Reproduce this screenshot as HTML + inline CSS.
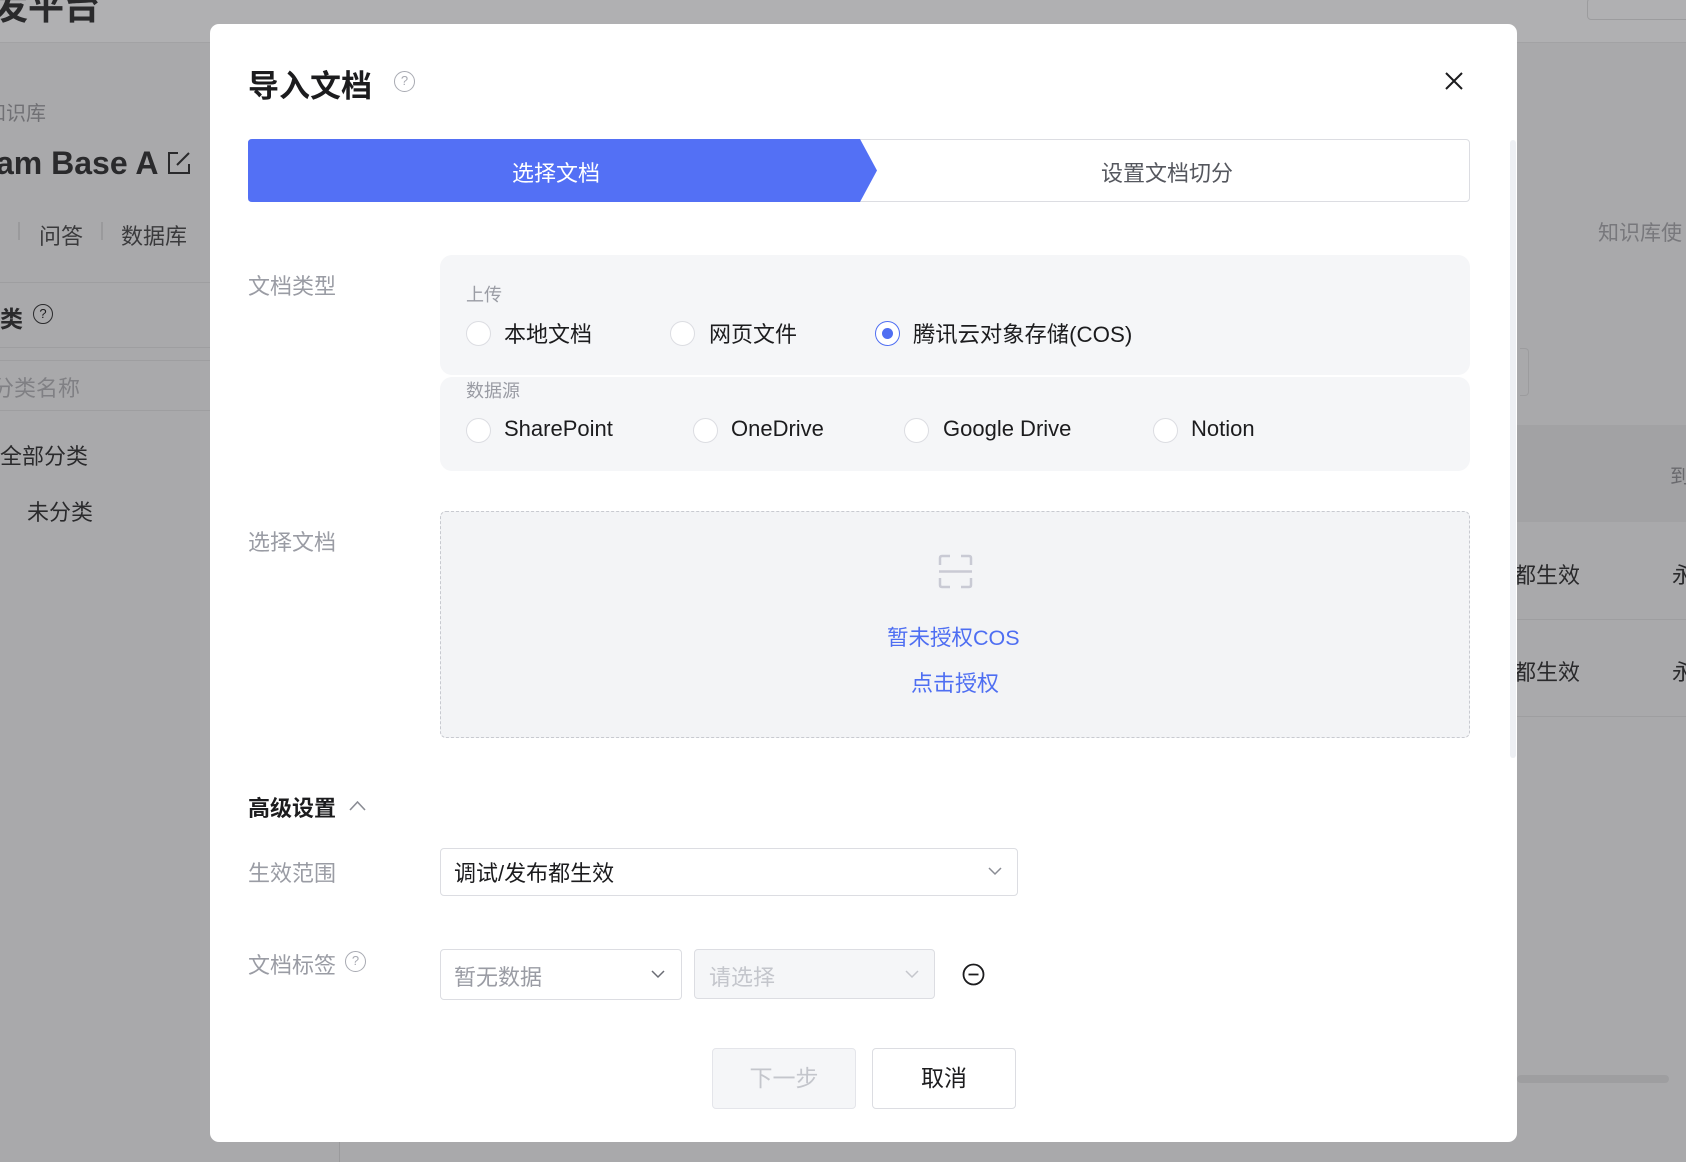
<!DOCTYPE html>
<html><head><meta charset="utf-8"><style>
*{box-sizing:border-box;margin:0;padding:0}
body{width:1686px;height:1162px;position:relative;overflow:hidden;background:#a9a9ab;font-family:"Liberation Sans","Noto Sans CJK SC",sans-serif;color:#1c1c1e}
.a{position:absolute;white-space:nowrap}
.bg{color:#2a2a2c}
.g{color:#9a9ca4}
.radio{position:absolute;width:25px;height:25px;border-radius:50%;border:1px solid #dcdde2;background:#fff}
.radio.on{border-color:#4f6ef2}
.radio.on::after{content:"";position:absolute;left:6px;top:6px;width:11px;height:11px;border-radius:50%;background:#4f6ef2}
.opt{font-size:22px;color:#1c1c1e}
.sel{position:absolute;border:1px solid #dcdde2;border-radius:4px;background:#fff}
</style></head><body>
<!-- backdrop -->
<div class="a" style="left:0;top:0;width:1686px;height:43px;background:#b0b0b2;border-bottom:1px solid #a2a2a4"></div>
<div class="a bg" style="left:-8px;top:-22px;font-size:36px;font-weight:bold">发平台</div>
<div class="a" style="left:1587px;top:-2px;width:110px;height:22px;border:1px solid #9c9c9e;border-radius:4px"></div>
<div class="a" style="left:-14px;top:97px;font-size:20px;color:#707074">知识库</div>
<div class="a bg" style="left:-4px;top:145px;font-size:32px;font-weight:bold">am Base A</div>
<svg class="a" style="left:166px;top:150px" width="26" height="26" viewBox="0 0 26 26" fill="none" stroke="#2a2a2c" stroke-width="2"><path d="M12 3H3v20h20v-9"/><path d="M11 15l12-12"/></svg>
<div class="a" style="left:18px;top:222px;width:2px;height:18px;background:#9a9a9c"></div>
<div class="a" style="left:39px;top:219px;font-size:22px;color:#3a3a3c">问答</div>
<div class="a" style="left:101px;top:222px;width:2px;height:18px;background:#9a9a9c"></div>
<div class="a" style="left:121px;top:219px;font-size:22px;color:#3a3a3c">数据库</div>
<div class="a" style="left:0;top:282px;width:210px;height:1px;background:#9e9ea0"></div>
<div class="a bg" style="left:0;top:300px;font-size:23px;font-weight:bold">类</div>
<div class="a" style="left:33px;top:304px;width:20px;height:20px;border:1.5px solid #2a2a2c;border-radius:50%;font-size:13px;text-align:center;line-height:17px">?</div>
<div class="a" style="left:0;top:347px;width:210px;height:1px;background:#9e9ea0"></div>
<div class="a" style="left:0;top:360px;width:210px;height:51px;border-top:1px solid #9e9ea0;border-bottom:1px solid #9e9ea0"></div>
<div class="a" style="left:-8px;top:371px;font-size:22px;color:#808084">分类名称</div>
<div class="a bg" style="left:0;top:439px;font-size:22px">全部分类</div>
<div class="a bg" style="left:27px;top:495px;font-size:22px">未分类</div>
<div class="a" style="left:339px;top:1140px;width:1px;height:22px;background:#9a9a9c"></div>
<div class="a" style="left:1598px;top:217px;font-size:21px;color:#78787c">知识库使</div>
<div class="a" style="left:1520px;top:348px;width:9px;height:48px;border:1px solid #9c9c9e;border-left:none;border-radius:0 4px 4px 0"></div>
<div class="a" style="left:1517px;top:425px;width:169px;height:97px;background:#a2a2a4"></div>
<div class="a" style="left:1670px;top:460px;font-size:20px;color:#6a6a6e">到</div>
<div class="a bg" style="left:1514px;top:558px;font-size:22px">都生效</div>
<div class="a bg" style="left:1672px;top:558px;font-size:22px">永</div>
<div class="a" style="left:1517px;top:619px;width:169px;height:1px;background:#9e9ea0"></div>
<div class="a bg" style="left:1514px;top:655px;font-size:22px">都生效</div>
<div class="a bg" style="left:1672px;top:655px;font-size:22px">永</div>
<div class="a" style="left:1517px;top:716px;width:169px;height:1px;background:#9e9ea0"></div>
<div class="a" style="left:1517px;top:1075px;width:152px;height:8px;border-radius:4px;background:#9e9ea0"></div>

<!-- modal -->
<div class="a" style="left:210px;top:24px;width:1307px;height:1118px;background:#fff;border-radius:9px"></div>
<div class="a" style="left:248px;top:61px;font-size:31px;font-weight:bold;color:#1c1c1e">导入文档</div>
<div class="a" style="left:394px;top:71px;width:21px;height:21px;border:1.5px solid #a8aab2;border-radius:50%;font-size:13px;color:#a8aab2;text-align:center;line-height:18px">?</div>
<svg class="a" style="left:1445px;top:72px" width="18" height="18" viewBox="0 0 18 18" stroke="#1c1c1e" stroke-width="2"><path d="M1 1L17 17M17 1L1 17"/></svg>
<div class="a" style="left:1510px;top:140px;width:6px;height:618px;border-radius:3px;background:#eef0f4"></div>

<!-- steps -->
<div class="a" style="left:248px;top:139px;width:1222px;height:63px;border:1px solid #dcdde2;border-radius:4px"></div>
<svg class="a" style="left:248px;top:139px" width="630" height="63"><path d="M4 0H612L629 31.5L612 63H4Q0 63 0 59V4Q0 0 4 0Z" fill="#5370f5"/></svg>
<div class="a" style="left:512px;top:156px;font-size:22px;color:#fff">选择文档</div>
<div class="a" style="left:1101px;top:156px;font-size:22px;color:#55575e">设置文档切分</div>

<!-- type -->
<div class="a g" style="left:248px;top:269px;font-size:22px">文档类型</div>
<div class="a" style="left:440px;top:255px;width:1030px;height:120px;background:#f5f6f8;border-radius:12px"></div>
<div class="a" style="left:440px;top:377px;width:1030px;height:94px;background:#f5f6f8;border-radius:12px"></div>
<div class="a g" style="left:466px;top:281px;font-size:18px">上传</div>
<div class="radio" style="left:466px;top:321px"></div><div class="a opt" style="left:504px;top:317px">本地文档</div>
<div class="radio" style="left:670px;top:321px"></div><div class="a opt" style="left:709px;top:317px">网页文件</div>
<div class="radio on" style="left:875px;top:321px"></div><div class="a opt" style="left:913px;top:317px;font-size:22.3px">腾讯云对象存储(COS)</div>
<div class="a g" style="left:466px;top:377px;font-size:18px">数据源</div>
<div class="radio" style="left:466px;top:418px"></div><div class="a opt" style="left:504px;top:416px">SharePoint</div>
<div class="radio" style="left:693px;top:418px"></div><div class="a opt" style="left:731px;top:416px">OneDrive</div>
<div class="radio" style="left:904px;top:418px"></div><div class="a opt" style="left:943px;top:416px">Google Drive</div>
<div class="radio" style="left:1153px;top:418px"></div><div class="a opt" style="left:1191px;top:416px">Notion</div>

<!-- upload -->
<div class="a g" style="left:248px;top:525px;font-size:22px">选择文档</div>
<div class="a" style="left:440px;top:511px;width:1030px;height:227px;background:#f3f4f6;border:1px dashed #c8cad0;border-radius:6px"></div>
<svg class="a" style="left:938px;top:554px" width="35" height="35" viewBox="0 0 35 35" fill="none" stroke="#c9cad4" stroke-width="2.5"><path d="M2 11V4Q2 2 4 2H12M23 2H31Q33 2 33 4V11M33 24V31Q33 33 31 33H23M12 33H4Q2 33 2 31V24M1 17.5H34"/></svg>
<div class="a" style="left:887px;top:621px;font-size:21.5px;color:#4e6ef2">暂未授权COS</div>
<div class="a" style="left:911px;top:666px;font-size:22px;color:#4e6ef2">点击授权</div>

<!-- advanced -->
<div class="a" style="left:248px;top:791px;font-size:22px;font-weight:bold">高级设置</div>
<svg class="a" style="left:349px;top:800px" width="17" height="11" viewBox="0 0 17 11" fill="none" stroke="#8a8c94" stroke-width="1.6"><path d="M1 10L8.5 2L16 10"/></svg>
<div class="a g" style="left:248px;top:856px;font-size:22px">生效范围</div>
<div class="sel" style="left:440px;top:848px;width:578px;height:48px"></div>
<div class="a" style="left:454px;top:856px;font-size:22px">调试/发布都生效</div>
<svg class="a" style="left:988px;top:867px" width="14" height="9" viewBox="0 0 14 9" fill="none" stroke="#8a8c94" stroke-width="1.5"><path d="M1 1L7 7L13 1"/></svg>
<div class="a g" style="left:248px;top:948px;font-size:22px">文档标签</div>
<div class="a" style="left:345px;top:951px;width:21px;height:21px;border:1.5px solid #a8aab2;border-radius:50%;font-size:13px;color:#a8aab2;text-align:center;line-height:18px">?</div>
<div class="sel" style="left:440px;top:949px;width:242px;height:51px"></div>
<div class="a g" style="left:454px;top:960px;font-size:22px">暂无数据</div>
<svg class="a" style="left:651px;top:970px" width="14" height="9" viewBox="0 0 14 9" fill="none" stroke="#6a6c74" stroke-width="1.5"><path d="M1 1L7 7L13 1"/></svg>
<div class="sel" style="left:694px;top:949px;width:241px;height:50px;background:#f5f6f8"></div>
<div class="a" style="left:709px;top:960px;font-size:22px;color:#c4c6cc">请选择</div>
<svg class="a" style="left:905px;top:970px" width="14" height="9" viewBox="0 0 14 9" fill="none" stroke="#c4c6cc" stroke-width="1.5"><path d="M1 1L7 7L13 1"/></svg>
<svg class="a" style="left:962px;top:963px" width="23" height="23" viewBox="0 0 23 23" fill="none" stroke="#1c1c1e" stroke-width="1.8"><circle cx="11.5" cy="11.5" r="10"/><path d="M6.5 11.5H16.5"/></svg>

<!-- buttons -->
<div class="a" style="left:712px;top:1048px;width:144px;height:61px;border:1px solid #e4e5ea;border-radius:4px;background:#f5f6f8;font-size:23px;color:#c4c6cc;text-align:center;line-height:59px">下一步</div>
<div class="a" style="left:872px;top:1048px;width:144px;height:61px;border:1px solid #dcdde2;border-radius:4px;background:#fff;font-size:23px;color:#1c1c1e;text-align:center;line-height:59px">取消</div>
</body></html>
